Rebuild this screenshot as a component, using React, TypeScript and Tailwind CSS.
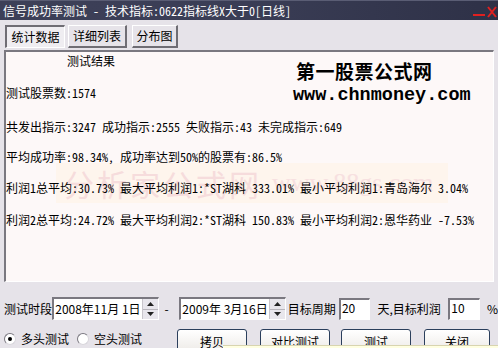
import React from "react";

const sunken = "border-t-2 border-l-2 border-b border-r border-t-[#7a7880] border-l-[#7a7880] border-b-white border-r-white";

function Spinner() {
	return (
		<div className="flex flex-col w-[16px] h-full border-l border-[#c9c6cc]">
			<div className="flex-1 flex items-center justify-center bg-[#e8e6ec] border-b border-[#b8b5bc]">
				<svg width="7" height="4" viewBox="0 0 7 4"><path d="M0 4 L3.5 0 L7 4 Z" fill="#222" /></svg>
			</div>
			<div className="flex-1 flex items-center justify-center bg-[#e8e6ec]">
				<svg width="7" height="4" viewBox="0 0 7 4"><path d="M0 0 L3.5 4 L7 0 Z" fill="#222" /></svg>
			</div>
		</div>
	);
}

function DateBox({ value }: { value: string }) {
	return (
		<div className={`flex items-stretch h-[23px] w-[108px] bg-white ${sunken}`}>
			<div className="flex-1 flex items-center pl-[1px] text-[12px] leading-none">{value}</div>
			<Spinner />
		</div>
	);
}

function NumBox({ value }: { value: string }) {
	return (
		<div className={`flex items-start h-[22px] w-[32px] bg-white ${sunken} pl-[1px] pt-[1px] text-[12px] leading-[14px]`}>
			{value}
		</div>
	);
}

function Radio({ checked, label }: { checked?: boolean; label: string }) {
	return (
		<div className="flex items-center gap-[5px]">
			<div className="w-[12px] h-[12px] rounded-full bg-white border border-t-[#7a7880] border-l-[#7a7880] border-b-[#d8d6dc] border-r-[#d8d6dc] flex items-center justify-center">
				{checked && <div className="w-[4px] h-[4px] rounded-full bg-black" />}
			</div>
			<span className="text-[12px] leading-[14px]">{label}</span>
		</div>
	);
}

function Btn({ label, w }: { label: string; w: string }) {
	return (
		<div className={`${w} h-[26px] rounded-[3px] border border-[#2b3f5c] bg-gradient-to-b from-white to-[#ebe8e4] flex items-center justify-center text-[12px]`}>
			{label}
		</div>
	);
}

export default function App() {
	const tabUp = "h-[23px] flex items-center justify-center text-[12px] bg-[#e6e3e9] border-t border-l border-b-2 border-r-2 border-t-white border-l-white border-b-[#6f6d74] border-r-[#6f6d74]";
	const tabDown = "h-[23px] flex items-center justify-center text-[12px] bg-[#efedf1] border-t-2 border-l-2 border-b border-r border-t-[#6f6d74] border-l-[#6f6d74] border-b-white border-r-white";

	return (
		<div className="relative w-[498px] h-[348px] overflow-hidden bg-[#e6e3e9] text-black flex flex-col font-['Noto_Sans_Mono_CJK_SC','Noto_Sans_CJK_SC',sans-serif]">
			{/* title bar */}
			<div className="relative h-[20px] shrink-0 flex items-center pl-[3px] bg-gradient-to-r from-[#3d4058] via-[#3a3d55] to-[#2e3147] border-t border-[#5a5d74]">
				<span className="text-white text-[12px] leading-none">信号成功率测试 - 技术指标:0622指标线X大于0[日线]</span>
				<div className="absolute right-[1px] top-[3px] flex items-end gap-[2px]">
					<svg width="12" height="14" viewBox="0 0 12 14"><rect x="0" y="10" width="12" height="2" fill="#e02020" /></svg>
					<svg width="10" height="12" viewBox="0 0 10 12"><path d="M1 1 L9 11 M9 1 L1 11" stroke="#e02020" strokeWidth="2" /></svg>
				</div>
			</div>

			{/* tabs */}
			<div className="flex items-end mt-[5px] ml-[5px] h-[23px] shrink-0">
				<div className={`${tabDown} w-[60px]`}>统计数据</div>
				<div className={`${tabUp} w-[59px] ml-[3px]`}>详细列表</div>
				<div className={`${tabUp} w-[46px] ml-[5px]`}>分布图</div>
			</div>

			{/* result panel */}
			<div className={`relative mt-[2px] ml-[4px] w-[490px] h-[232px] shrink-0 bg-[#fdf8f8] ${sunken}`}>
				{/* watermark */}
				<div className="absolute left-[50px] top-[111px] w-[392px] h-[40px] bg-[#fdf4e8]/70 flex items-center gap-[10px] pl-[8px] text-[#f6dcdc] font-['Noto_Sans_CJK_SC',sans-serif]">
					<span className="text-[30px] leading-none tracking-[3px]">分析家公式网</span>
					<span className="text-[26px] leading-none text-[#f7e0e0] font-['Liberation_Serif',serif]">www.88gs.com</span>
				</div>
				{/* logo */}
				<div className="absolute left-[290px] top-[8px] flex flex-col items-start">
					<span className="text-[19px] leading-[22px] font-bold tracking-[0.5px] font-['Noto_Sans_CJK_SC',sans-serif]">第一股票公式网</span>
					<span className="mt-[4px] -ml-[3px] text-[18.5px] leading-[20px] font-bold font-['Liberation_Mono',monospace]">www.chnmoney.com</span>
				</div>

				<div className="relative flex flex-col gap-[18px] pt-[2px] text-[12px] leading-[14px] whitespace-nowrap">
					<div className="pl-[61px]">测试结果</div>
					<div>测试股票数:1574</div>
					<div className="mt-[2px]">共发出指示:3247 成功指示:2555 失败指示:43 未完成指示:649</div>
					<div className="-mt-[2px]">平均成功率:98.34%, 成功率达到50%的股票有:86.5%</div>
					<div className="-mt-[1px]">利润1总平均:30.73% 最大平均利润1:*ST湖科 333.01% 最小平均利润1:青岛海尔 3.04%</div>
					<div>利润2总平均:24.72% 最大平均利润2:*ST湖科 150.83% 最小平均利润2:恩华药业 -7.53%</div>
				</div>
			</div>

			{/* settings row */}
			<div className="flex items-center mt-[15px] h-[23px] shrink-0 text-[12px] font-['Noto_Sans_CJK_SC',sans-serif]">
				<span className="ml-[4px] w-[49px]">测试时段</span>
				<DateBox value="2008年11月 1日" />
				<span className="ml-[6px] w-[15px]">-</span>
				<DateBox value="2009年 3月16日" />
				<span className="ml-[2px] w-[52px]">目标周期</span>
				<NumBox value="20" />
				<span className="ml-[7px] w-[72px]">天,目标利润</span>
				<NumBox value="10" />
				<span className="ml-[7px]">%</span>
			</div>

			{/* bottom row */}
			<div className="flex items-start mt-[9px] h-[26px] shrink-0 font-['Noto_Sans_CJK_SC',sans-serif]">
				<div className="flex items-center gap-[8px] ml-[4px] mt-[3px] w-[173px]">
					<Radio checked label="多头测试" />
					<Radio label="空头测试" />
				</div>
				<Btn label="拷贝" w="w-[70px]" />
				<div className="ml-[13px]"><Btn label="对比测试" w="w-[70px]" /></div>
				<div className="ml-[11px]"><Btn label="测试" w="w-[70px]" /></div>
				<div className="ml-[13px]"><Btn label="关闭" w="w-[66px]" /></div>
			</div>

			<div className="absolute left-[223px] top-[345px] w-[275px] h-[3px] bg-[#ffffe1] border-t border-[#d8d4b0]" />
		</div>
	);
}
